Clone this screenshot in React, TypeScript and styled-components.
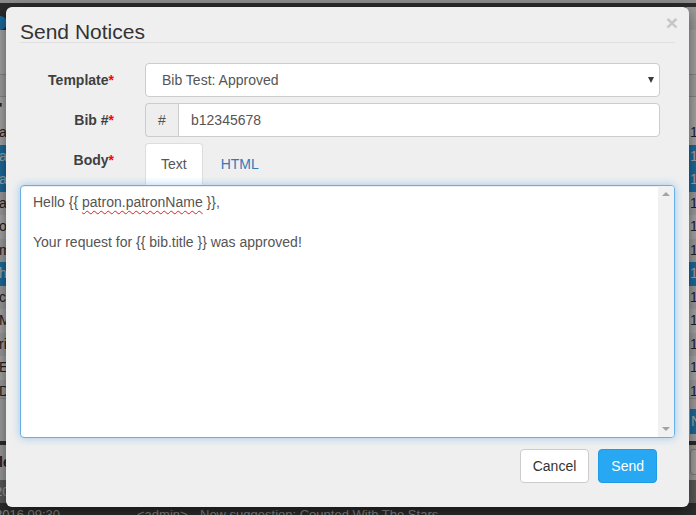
import React from 'react';
import styled, { createGlobalStyle } from 'styled-components';

const GlobalStyle = createGlobalStyle`
  html, body {
    margin: 0;
    padding: 0;
    width: 100%;
    height: 100%;
    overflow: hidden;
  }

  body {
    font-family: 'Liberation Sans', Arial, Helvetica, sans-serif;
    font-size: 14px;
    color: #333;
  }

  *, *::before, *::after {
    box-sizing: border-box;
  }
`;

/* ---------- page behind the dialog ---------- */

const Screen = styled.div`
  position: relative;
  width: 696px;
  height: 515px;
  overflow: hidden;
  background: #fff;
`;

const Page = styled.div`
  display: flex;
  flex-direction: column;
  height: 100%;
`;

const TopEdge = styled.div`
  flex: none;
  height: 3px;
  background: #d7d7d7;
`;

const NavBar = styled.header`
  flex: none;
  height: 27px;
  display: flex;
  justify-content: space-between;
  align-items: flex-end;
  background: #424242;
`;

const Avatar = styled.span`
  width: 14px;
  height: 14px;
  margin-left: -7px;
  border-radius: 50%;
  background: #2da3f0;
`;

const NavSearch = styled.span`
  width: 10px;
  height: 23px;
  background: #eeeeee;
`;

const Toolbar = styled.div`
  flex: none;
  height: 45px;
  background: #fdfdfd;
  border-bottom: 1px solid #cfcfcf;
`;

const FilterBar = styled.div`
  flex: none;
  height: 22px;
  background: #f4f4f4;
  border-bottom: 1px solid #cfcfcf;
`;

const Row = styled.div<{ $selected?: boolean; $alt?: boolean; $height?: number; $bold?: boolean }>`
  flex: none;
  height: ${({ $height }) => $height ?? 23.5}px;
  display: flex;
  justify-content: space-between;
  align-items: flex-start;
  overflow: hidden;
  line-height: 23px;
  font-size: 14px;
  font-weight: ${({ $bold }) => ($bold ? 'bold' : 'normal')};
  background: ${({ $selected, $alt }) => ($selected ? '#2da3f0' : $alt ? '#f0f0f0' : '#ffffff')};
  color: ${({ $selected }) => ($selected ? '#ffffff' : '#333333')};
`;

const EdgeText = styled.span`
  margin-left: -1px;
  white-space: nowrap;
`;

const CountCell = styled.span`
  width: 6px;
  overflow: hidden;
  white-space: nowrap;
`;

const ListFoot = styled.div`
  flex: none;
  height: 43px;
  display: flex;
  justify-content: flex-end;
  align-items: flex-start;
  padding-top: 10px;
  background: #f4f4f4;
  border-top: 1px solid #cfcfcf;
`;

const NewButton = styled.span`
  width: 6px;
  height: 25px;
  overflow: hidden;
  padding-left: 1px;
  line-height: 25px;
  color: #ffffff;
  background: #2da3f0;
`;

const Divider = styled.div`
  flex: none;
  height: 4px;
  background: #424242;
`;

const InputBar = styled.div`
  flex: none;
  height: 35px;
  display: flex;
  justify-content: space-between;
  align-items: center;
  background: #eeeeee;
  font-weight: bold;
`;

const BarBox = styled.span`
  width: 6px;
  height: 26px;
  border: 1px solid #bdbdbd;
  border-right: 0;
  border-radius: 4px 0 0 4px;
  background: #f8f8f8;
`;

const LogPanel = styled.div`
  flex: 1;
  background: #464646;
  color: #cfcfcf;
  font-size: 13px;
`;

const LogRow = styled.div<{ $highlight?: boolean }>`
  display: grid;
  grid-template-columns: 142px 63px 1fr;
  height: 23px;
  line-height: 23px;
  margin-left: -5px;
  white-space: nowrap;
  background: ${({ $highlight }) => ($highlight ? '#8c8c8c' : 'transparent')};
  color: ${({ $highlight }) => ($highlight ? '#eeeeee' : '#cfcfcf')};
`;

const Backdrop = styled.div`
  position: absolute;
  inset: 0;
  background: rgba(0, 0, 0, 0.35);
`;

/* ---------- dialog ---------- */

const Dialog = styled.div`
  position: absolute;
  left: 6px;
  top: 7px;
  width: 683px;
  height: 500px;
  display: flex;
  flex-direction: column;
  background: #efefef;
  border-radius: 6px;
  box-shadow: 0 5px 15px rgba(0, 0, 0, 0.5);
`;

const DialogHeader = styled.div`
  position: relative;
  margin: 0 14px;
  padding-top: 14px;
  border-bottom: 1px solid #e0e0e0;
`;

const Title = styled.h4`
  margin: 0;
  font-size: 21px;
  line-height: 21px;
  font-weight: normal;
  color: #333;
`;

const CloseButton = styled.button`
  position: absolute;
  right: -3px;
  top: 5px;
  padding: 0;
  border: 0;
  background: none;
  font: bold 21px/1 'Liberation Sans', Arial, sans-serif;
  color: #c6c6c6;
  cursor: pointer;
`;

const Form = styled.form`
  display: flex;
  flex-direction: column;
  gap: 6px;
  padding: 20px 14px 0;
`;

const FieldRow = styled.div`
  display: grid;
  grid-template-columns: 94px 1fr;
  column-gap: 31px;
  padding-right: 15px;
`;

const FieldLabel = styled.label`
  align-self: start;
  padding-top: 7px;
  text-align: right;
  font-size: 14px;
  line-height: 20px;
  font-weight: bold;
  color: #3f3f3f;
`;

const Required = styled.span`
  color: #ff0000;
`;

const SelectBox = styled.div`
  height: 34px;
  display: flex;
  justify-content: space-between;
  align-items: center;
  padding: 0 5px 0 16px;
  background: #fff;
  border: 1px solid #ccc;
  border-radius: 4px;
  color: #555;
  font-size: 14px;
`;

const Caret = styled.span`
  width: 0;
  height: 0;
  border-left: 3.5px solid transparent;
  border-right: 3.5px solid transparent;
  border-top: 6px solid #3a3a3a;
`;

const InputGroup = styled.div`
  display: flex;
  height: 34px;
`;

const Addon = styled.span`
  width: 33px;
  display: flex;
  justify-content: center;
  align-items: center;
  background: #eeeeee;
  border: 1px solid #ccc;
  border-right: 0;
  border-radius: 4px 0 0 4px;
  color: #555;
  font-size: 14px;
`;

const TextInput = styled.input`
  flex: 1;
  min-width: 0;
  height: 34px;
  padding: 6px 12px;
  background: #fff;
  border: 1px solid #ccc;
  border-radius: 0 4px 4px 0;
  font: 14px/20px 'Liberation Sans', Arial, sans-serif;
  color: #555;
  outline: none;
`;

const BodyGroup = styled.div`
  display: flex;
  flex-direction: column;
`;

const TabList = styled.div`
  display: flex;
  gap: 2px;
`;

const Tab = styled.button<{ $active?: boolean }>`
  padding: 10px 15px;
  font: 14px/20px 'Liberation Sans', Arial, sans-serif;
  background: ${({ $active }) => ($active ? '#fff' : 'transparent')};
  border: 1px solid ${({ $active }) => ($active ? '#dddddd' : 'transparent')};
  border-bottom-color: transparent;
  border-radius: 4px 4px 0 0;
  color: ${({ $active }) => ($active ? '#555' : '#337ab7')};
  cursor: pointer;
`;

const Editor = styled.div`
  display: grid;
  grid-template-columns: 1fr 16px;
  height: 253px;
  overflow: hidden;
  background: #fff;
  border: 1px solid #66afe9;
  border-radius: 4px;
  box-shadow: inset 0 1px 1px rgba(0, 0, 0, 0.075), 0 0 8px rgba(102, 175, 233, 0.6);
`;

const EditorText = styled.div`
  padding: 6px 12px;
  font-size: 14px;
  line-height: 20px;
  color: #555;
  white-space: pre-wrap;
`;

const Misspelled = styled.span`
  text-decoration: underline wavy #e02020;
  text-decoration-thickness: 1px;
  text-underline-offset: 3px;
`;

const ScrollTrack = styled.div`
  display: flex;
  flex-direction: column;
  justify-content: space-between;
  align-items: center;
  padding: 6px 0;
  background: #f1f1f1;
`;

const ScrollArrow = styled.span<{ $down?: boolean }>`
  width: 0;
  height: 0;
  border-left: 4px solid transparent;
  border-right: 4px solid transparent;
  ${({ $down }) => ($down ? 'border-top: 4px solid #a3a3a3;' : 'border-bottom: 4px solid #a3a3a3;')}
`;

const DialogFooter = styled.div`
  display: flex;
  justify-content: flex-end;
  gap: 9px;
  padding: 11px 32px 0 0;
`;

const Button = styled.button<{ $primary?: boolean }>`
  height: 34px;
  padding: 6px 12px;
  font: 14px/20px 'Liberation Sans', Arial, sans-serif;
  border-radius: 4px;
  border: 1px solid ${({ $primary }) => ($primary ? '#1f9be6' : '#cccccc')};
  background: ${({ $primary }) => ($primary ? '#28a7f3' : '#ffffff')};
  color: ${({ $primary }) => ($primary ? '#ffffff' : '#333333')};
  cursor: pointer;
`;

const listRows = [
  { text: 'a', alt: false },
  { text: 'a', selected: true },
  { text: 'a', selected: true },
  { text: 'a', alt: true },
  { text: 'or', alt: false },
  { text: 'm', alt: true },
  { text: 'h', selected: true },
  { text: 'c', alt: true },
  { text: 'Ma', alt: false },
  { text: 'ri', alt: true },
  { text: 'E', alt: false },
];

export default function App() {
  return (
    <>
      <GlobalStyle />
      <Screen>
        <Page>
          <TopEdge />
          <NavBar>
            <Avatar />
            <NavSearch />
          </NavBar>
          <Toolbar />
          <FilterBar />
          <Row $height={24} $bold>
            <EdgeText>' A</EdgeText>
            <CountCell />
          </Row>
          {listRows.map((row, i) => (
            <Row key={i} $selected={row.selected} $alt={row.alt}>
              <EdgeText>{row.text}</EdgeText>
              <CountCell>1</CountCell>
            </Row>
          ))}
          <Row $height={18} $alt>
            <EdgeText>D</EdgeText>
            <CountCell>1</CountCell>
          </Row>
          <ListFoot>
            <NewButton>N</NewButton>
          </ListFoot>
          <Divider />
          <InputBar>
            <EdgeText>le</EdgeText>
            <BarBox />
          </InputBar>
          <LogPanel>
            <LogRow $highlight>
              <span>2016 09:28</span>
              <span>&lt;admin&gt;</span>
              <span>Suggestion approved: The Martian</span>
            </LogRow>
            <LogRow>
              <span>2016 09:30</span>
              <span>&lt;admin&gt;</span>
              <span>New suggestion: Counted With The Stars</span>
            </LogRow>
          </LogPanel>
        </Page>

        <Backdrop />

        <Dialog role='dialog'>
          <DialogHeader>
            <Title>Send Notices</Title>
            <CloseButton type='button' aria-label='Close'>
              ×
            </CloseButton>
          </DialogHeader>

          <Form>
            <FieldRow>
              <FieldLabel>
                Template<Required>*</Required>
              </FieldLabel>
              <SelectBox>
                <span>Bib Test: Approved</span>
                <Caret />
              </SelectBox>
            </FieldRow>

            <FieldRow>
              <FieldLabel htmlFor='bib'>
                Bib #<Required>*</Required>
              </FieldLabel>
              <InputGroup>
                <Addon>#</Addon>
                <TextInput id='bib' readOnly value='b12345678' />
              </InputGroup>
            </FieldRow>

            <BodyGroup>
              <FieldRow>
                <FieldLabel>
                  Body<Required>*</Required>
                </FieldLabel>
                <TabList>
                  <Tab type='button' $active>
                    Text
                  </Tab>
                  <Tab type='button'>HTML</Tab>
                </TabList>
              </FieldRow>
              <Editor>
                <EditorText>
                  Hello {'{{ '}
                  <Misspelled>patron.patronName</Misspelled>
                  {' }},\n\nYour request for {{ bib.title }} was approved!'}
                </EditorText>
                <ScrollTrack>
                  <ScrollArrow />
                  <ScrollArrow $down />
                </ScrollTrack>
              </Editor>
            </BodyGroup>
          </Form>

          <DialogFooter>
            <Button type='button'>Cancel</Button>
            <Button type='button' $primary>
              Send
            </Button>
          </DialogFooter>
        </Dialog>
      </Screen>
    </>
  );
}
